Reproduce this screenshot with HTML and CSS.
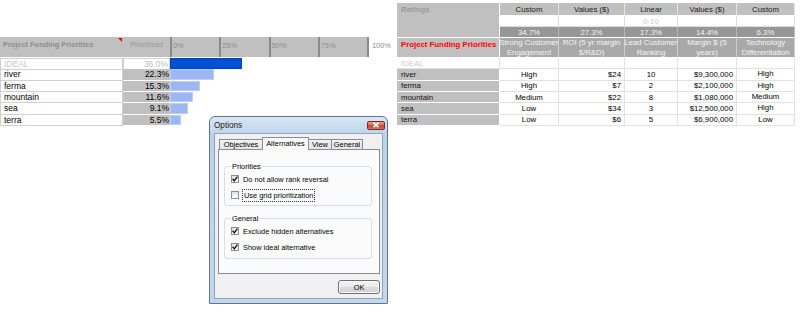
FILE: index.html
```html
<!DOCTYPE html>
<html lang="en">
<head>
  <meta charset="UTF-8">
  <title>Project Funding Priorities</title>
  <link rel="stylesheet" href="styles.css">
</head>
<body>
  <div class="sheet">
    <!-- Prioritized chart -->
    <section class="chart">
      <div class="chart-head">
        <div class="head-name">Project Funding Priorities</div>
        <div class="head-pct">Prioritized</div>
        <div class="axis">
          <span>0%</span><span>25%</span><span>50%</span><span>75%</span>
        </div>
        <div class="axis-end">100%</div>
      </div>
      <div class="row ideal">
        <div class="name">IDEAL</div>
        <div class="pct">36.0%</div>
        <div class="bar-cell"><div class="bar" style="width: 36.0%"></div></div>
      </div>
      <div class="row">
        <div class="name">river</div>
        <div class="pct">22.3%</div>
        <div class="bar-cell"><div class="bar" style="width: 22.3%"></div></div>
      </div>
      <div class="row">
        <div class="name">ferma</div>
        <div class="pct">15.3%</div>
        <div class="bar-cell"><div class="bar" style="width: 15.3%"></div></div>
      </div>
      <div class="row">
        <div class="name">mountain</div>
        <div class="pct">11.6%</div>
        <div class="bar-cell"><div class="bar" style="width: 11.6%"></div></div>
      </div>
      <div class="row">
        <div class="name">sea</div>
        <div class="pct">9.1%</div>
        <div class="bar-cell"><div class="bar" style="width: 9.1%"></div></div>
      </div>
      <div class="row">
        <div class="name">terra</div>
        <div class="pct">5.5%</div>
        <div class="bar-cell"><div class="bar" style="width: 5.5%"></div></div>
      </div>
    </section>

    <!-- Ratings table -->
    <section class="ratings">
      <div class="c rate-title">Ratings</div>
      <div class="c hdr">Custom</div>
      <div class="c hdr">Values ($)</div>
      <div class="c hdr">Linear</div>
      <div class="c hdr">Values ($)</div>
      <div class="c hdr">Custom</div>

      <div class="c blank"></div>
      <div class="c blank"></div>
      <div class="c blank range">0-10</div>
      <div class="c blank"></div>
      <div class="c blank"></div>

      <div class="c wt">34.7%</div>
      <div class="c wt">27.3%</div>
      <div class="c wt">17.3%</div>
      <div class="c wt">14.4%</div>
      <div class="c wt">6.3%</div>

      <div class="c pfp">Project Funding Priorities</div>
      <div class="c lbl">Strong Customer<br>Engagement</div>
      <div class="c lbl">ROI (5 yr margin<br>$/R&amp;D)</div>
      <div class="c lbl">Lead Customer<br>Ranking</div>
      <div class="c lbl">Margin $ (5<br>years)</div>
      <div class="c lbl">Technology<br>Differentiation</div>

      <div class="c alt ideal-name">IDEAL</div>
      <div class="c v"></div><div class="c v"></div><div class="c v"></div><div class="c v"></div><div class="c v"></div>

      <div class="c alt">river</div>
      <div class="c v">High</div><div class="c v r">$24</div><div class="c v">10</div><div class="c v r">$9,300,000</div><div class="c v top">High</div>

      <div class="c alt">ferma</div>
      <div class="c v">High</div><div class="c v r">$7</div><div class="c v">2</div><div class="c v r">$2,100,000</div><div class="c v top">High</div>

      <div class="c alt">mountain</div>
      <div class="c v">Medium</div><div class="c v r">$22</div><div class="c v">8</div><div class="c v r">$1,080,000</div><div class="c v top">Medium</div>

      <div class="c alt">sea</div>
      <div class="c v">Low</div><div class="c v r">$34</div><div class="c v">3</div><div class="c v r">$12,500,000</div><div class="c v top">High</div>

      <div class="c alt">terra</div>
      <div class="c v">Low</div><div class="c v r">$6</div><div class="c v">5</div><div class="c v r">$6,900,000</div><div class="c v top">Low</div>
    </section>
  </div>

  <!-- Options dialog -->
  <div class="dialog">
    <div class="titlebar">
      <span class="title">Options</span>
      <span class="close">
        <svg width="8" height="6" viewBox="0 0 8 6"><path d="M1.5 0.8 L6.5 5.2 M6.5 0.8 L1.5 5.2" stroke="#fff" stroke-width="1.6"/></svg>
      </span>
    </div>
    <div class="client">
      <div class="tabs">
        <span class="tab t-obj">Objectives</span>
        <span class="tab t-alt active">Alternatives</span>
        <span class="tab t-view">View</span>
        <span class="tab t-gen">General</span>
      </div>
      <div class="panel">
        <fieldset class="group">
          <legend>Priorities</legend>
          <div class="opt">
            <span class="box checked"><svg width="6" height="6" viewBox="0 0 6 6"><path d="M0.6 2.8 L2.3 4.8 L5.4 0.6" fill="none" stroke="#1a1a1a" stroke-width="1.4"/></svg></span>
            <span>Do not allow rank reversal</span>
          </div>
          <div class="opt">
            <span class="box"></span>
            <span class="focus">Use grid prioritization</span>
          </div>
        </fieldset>
        <fieldset class="group second">
          <legend>General</legend>
          <div class="opt">
            <span class="box checked"><svg width="6" height="6" viewBox="0 0 6 6"><path d="M0.6 2.8 L2.3 4.8 L5.4 0.6" fill="none" stroke="#1a1a1a" stroke-width="1.4"/></svg></span>
            <span>Exclude hidden alternatives</span>
          </div>
          <div class="opt">
            <span class="box checked"><svg width="6" height="6" viewBox="0 0 6 6"><path d="M0.6 2.8 L2.3 4.8 L5.4 0.6" fill="none" stroke="#1a1a1a" stroke-width="1.4"/></svg></span>
            <span>Show ideal alternative</span>
          </div>
        </fieldset>
      </div>
      <div class="buttons">
        <button class="ok">OK</button>
      </div>
    </div>
  </div>
</body>
</html>
```

FILE: styles.css
```css
* {
  box-sizing: border-box;
}

body {
  margin: 0;
  width: 800px;
  height: 312px;
  overflow: hidden;
  position: relative;
  background: #ffffff;
  font-family: "Liberation Sans", Arial, sans-serif;
  color: #000;
}

.sheet {
  display: flex;
  align-items: flex-start;
  padding-top: 3px;
}

/* left chart */
.chart {
  flex: none;
  width: 397px;
  margin-top: 34px;
  font-size: 8.5px;
}

.chart-head {
  display: grid;
  grid-template-columns: 123px 47px 199px 1fr;
  height: 21px;
  padding-bottom: 1px;
  font-size: 7.4px;
}

.head-name {
  position: relative;
  background: #c0c0c0;
  color: #8e8e8e;
  font-weight: bold;
  padding: 3px 0 0 3px;
}

.head-name::after {
  content: "";
  position: absolute;
  top: 1px;
  right: 1px;
  border-top: 4px solid #ff0000;
  border-left: 4px solid transparent;
}

.head-pct {
  background: #c0c0c0;
  color: #9a9a9a;
  text-align: right;
  padding: 3px 7px 0 0;
}

.axis {
  display: grid;
  grid-template-columns: repeat(4, 1fr);
  background: #c0c0c0;
  border-right: 2px solid #8a8a8a;
}

.axis span {
  border-left: 2px solid #8a8a8a;
  color: #8e8e8e;
  padding: 4px 0 0 1px;
}

.axis-end {
  color: #8e8e8e;
  padding: 4px 0 0 3px;
}

.row {
  display: grid;
  grid-template-columns: 123px 47px 199px;
  height: 11.33px;
  line-height: 10px;
}

.name {
  border: 1px solid #d0d0d0;
  border-top: 0;
  padding-left: 3px;
}

.pct {
  background: #c0c0c0;
  border-bottom: 1px solid #fff;
  text-align: right;
  padding-right: 1px;
}

.row.ideal .name {
  border-top: 1px solid #d0d0d0;
  color: #c8c8c8;
}

.row.ideal .pct {
  background: #fff;
  color: #bdbdbd;
  border: 1px solid #d0d0d0;
}

.bar-cell {
  padding-bottom: 1px;
}

.bar {
  height: 100%;
  background: #9cb7f1;
  border: 1px solid #bccff6;
}

.row.ideal .bar {
  background: #0050d4;
  border-color: #0044bc;
}

/* right ratings table */
.ratings {
  flex: none;
  width: 398px;
  display: grid;
  grid-template-columns: 103px 59px 66px 53px 59px 58px;
  grid-template-rows: 13px 11px 11px 20px repeat(6, 11.33px);
  font-size: 7.8px;
}

.c {
  display: flex;
  align-items: center;
  justify-content: center;
  white-space: nowrap;
  overflow: hidden;
  border-right: 1px solid #fff;
  border-bottom: 1px solid #fff;
}

.rate-title {
  grid-row: span 3;
  background: #c0c0c0;
  color: #9a9a9a;
  font-weight: bold;
  align-items: flex-start;
  justify-content: flex-start;
  padding: 2px 0 0 4px;
}

.hdr {
  background: #c0c0c0;
  color: #222;
  border-right-color: #e6e6e6;
}

.blank {
  background: #fff;
  border-color: #dedede;
}

.range {
  color: #cccccc;
}

.wt {
  background: #979797;
  color: #f2f2f2;
  border-right-color: #b8b8b8;
}

.pfp {
  background: #c0c0c0;
  color: #ff0000;
  font-weight: bold;
  align-items: flex-start;
  justify-content: flex-start;
  padding: 2px 0 0 4px;
}

.lbl {
  background: #a9a9a9;
  color: #f4f4f4;
  line-height: 10px;
  text-align: center;
  border-right-color: #cfcfcf;
}

.alt {
  background: #c0c0c0;
  color: #111;
  justify-content: flex-start;
  padding-left: 4px;
}

.alt.ideal-name {
  background: #fff;
  color: #cccccc;
  border-color: #e0e0e0;
}

.v {
  background: #fff;
  border-color: #e2e2e2;
}

.v.r {
  justify-content: flex-end;
  padding-right: 3px;
}

.v.top {
  align-items: flex-start;
}

/* options dialog */
.dialog {
  position: absolute;
  left: 209px;
  top: 116px;
  width: 179px;
  height: 188px;
  border: 1px solid #5f7795;
  border-radius: 6px 6px 0 0;
  background: linear-gradient(#d9e6f4, #bcd2ea 18px, #c4d7ec);
  padding: 0 4px 4px 4px;
  display: flex;
  flex-direction: column;
  font-size: 7.4px;
}

.titlebar {
  height: 16px;
  display: flex;
  align-items: center;
  justify-content: space-between;
}

.title {
  font-size: 8.2px;
  color: #1c1c1c;
}

.close {
  width: 18px;
  height: 9px;
  margin-right: -2px;
  border: 1px solid #7a2c24;
  border-radius: 2px;
  background: linear-gradient(#e9a594, #d2664f 45%, #c0402d 55%, #d67a5f);
  display: flex;
  align-items: center;
  justify-content: center;
}

.client {
  flex: 1;
  background: #f0f0f0;
  border: 1px solid #8ea4bf;
  padding: 3px 2px 0 3px;
  display: flex;
  flex-direction: column;
}

.tabs {
  display: flex;
  align-items: flex-start;
  height: 12px;
  padding-left: 1px;
}

.tab {
  height: 10px;
  margin-top: 2px;
  border: 1px solid #898c95;
  border-bottom: 0;
  background: linear-gradient(#f3f3f3, #e4e4e4);
  line-height: 9px;
  text-align: center;
  margin-right: -1px;
}

.t-obj { width: 44px; }
.t-alt { width: 47px; }
.t-view { width: 24px; }
.t-gen { width: 32px; }

.tab.active {
  position: relative;
  z-index: 1;
  height: 13px;
  margin-top: 0;
  background: #fbfbfb;
  line-height: 11px;
}

.panel {
  height: 125px;
  border: 1px solid #898c95;
  background: #fbfbfb;
  padding: 12px 7px 0 5px;
}

.group {
  margin: 0;
  min-inline-size: 0;
  padding: 2px 0 4px 6px;
  border: 1px solid #d5dfe5;
  border-radius: 3px;
}

.group.second {
  margin-top: 8px;
  padding-bottom: 5px;
}

.group legend {
  padding: 0 1px;
  line-height: 9px;
}

.opt {
  display: flex;
  align-items: center;
  gap: 4px;
  height: 12px;
}

.opt + .opt {
  margin-top: 4px;
}

.box {
  width: 8px;
  height: 8px;
  border: 1px solid #8e8f8f;
  background: linear-gradient(#e2e2e2, #ffffff);
  display: flex;
  align-items: center;
  justify-content: center;
}

.focus {
  outline: 1px dotted #333;
  padding: 1px 1px;
}

.buttons {
  display: flex;
  justify-content: flex-end;
  margin-top: 6px;
}

.ok {
  width: 42px;
  height: 14px;
  padding: 0;
  font-family: inherit;
  font-size: 7.4px;
  color: #000;
  border: 1px solid #707070;
  border-radius: 3px;
  background: linear-gradient(#f2f2f2 0%, #ebebeb 50%, #dddddd 50%, #cfcfcf 100%);
  box-shadow: inset 0 0 0 1px #fcfcfc;
}
```
